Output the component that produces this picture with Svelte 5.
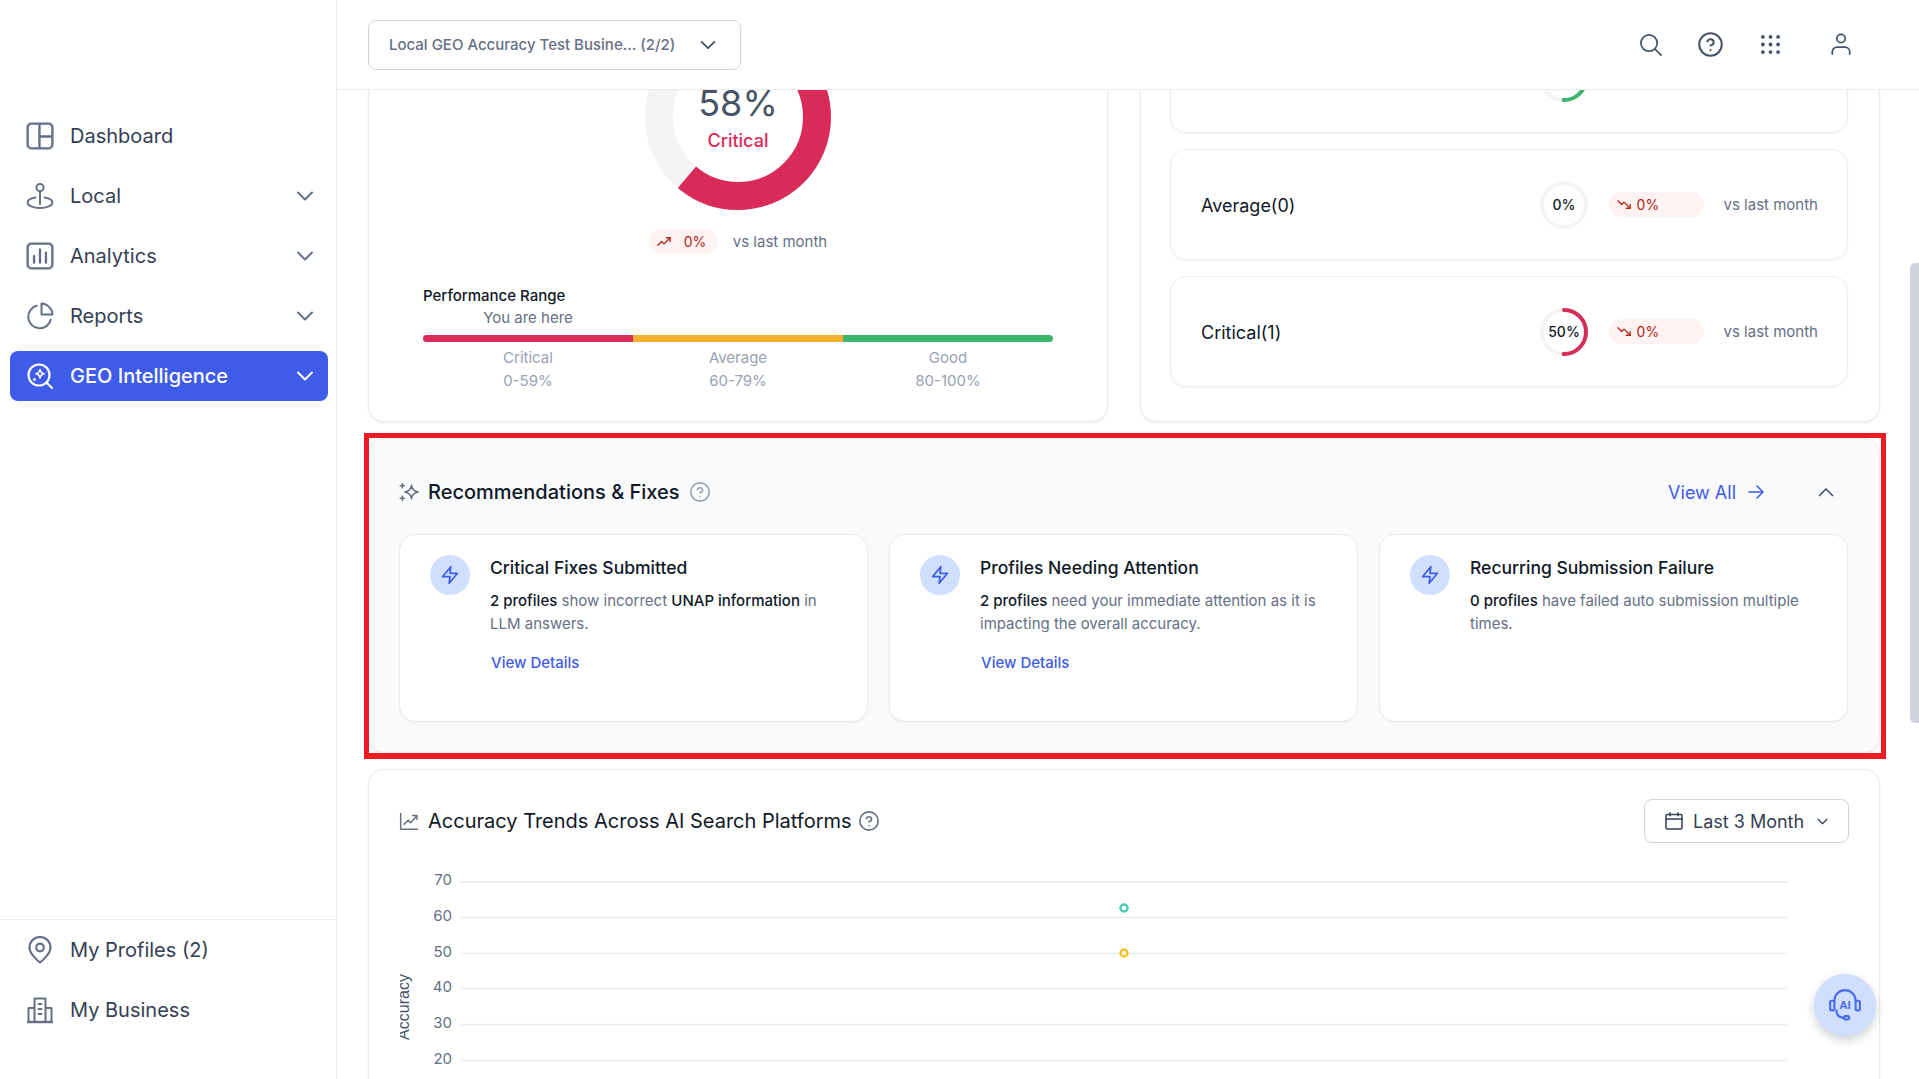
<script>
  const trends = [
    { label: 'Good(1)', pct: 50, color: '#3CB66E', dir: 'up' },
    { label: 'Average(0)', pct: 0, color: '#F3B12F', dir: 'down' },
    { label: 'Critical(1)', pct: 50, color: '#D92B5A', dir: 'down' }
  ];

  const fixes = [
    {
      title: 'Critical Fixes Submitted',
      parts: [['2 profiles', true], [' show incorrect ', false], ['UNAP information', true], [' in LLM answers.', false]],
      link: true
    },
    {
      title: 'Profiles Needing Attention',
      parts: [['2 profiles', true], [' need your immediate attention as it is impacting the overall accuracy.', false]],
      link: true
    },
    {
      title: 'Recurring Submission Failure',
      parts: [['0 profiles', true], [' have failed auto submission multiple times.', false]],
      link: false
    }
  ];

  const ranges = [
    { name: 'Critical', span: '0-59%' },
    { name: 'Average', span: '60-79%' },
    { name: 'Good', span: '80-100%' }
  ];

  const gridLines = [
    { v: 70, y: 22 },
    { v: 60, y: 57.5 },
    { v: 50, y: 93.5 },
    { v: 40, y: 128.5 },
    { v: 30, y: 164.5 },
    { v: 20, y: 200.5 },
    { v: 10, y: 236.5 }
  ];

  const ringLen = 2 * Math.PI * 22;
  const donutLen = 2 * Math.PI * 79;
</script>

{#snippet chevron(cls)}
  <svg class={cls} viewBox="0 0 24 24" fill="none" stroke="currentColor" stroke-width="2" stroke-linecap="round" stroke-linejoin="round"><path d="M5 8.5l7 7 7-7" /></svg>
{/snippet}

{#snippet help(cls)}
  <svg class={cls} viewBox="0 0 24 24" fill="none" stroke="currentColor" stroke-width="1.8" stroke-linecap="round" stroke-linejoin="round"><circle cx="12" cy="12" r="10" /><path d="M9.2 9.2a2.9 2.9 0 0 1 5.6 1c0 1.9-2.8 2.6-2.8 2.6" /><path d="M12 17h.01" /></svg>
{/snippet}

{#snippet trendIcon(dir)}
  <svg class="trend" viewBox="0 0 16 16" fill="none" stroke="currentColor" stroke-width="1.4" stroke-linecap="round" stroke-linejoin="round">
    {#if dir === 'up'}
      <path d="M1 12l4-4 2.5 2.5L14 4" /><path d="M10 4h4v4" />
    {:else}
      <path d="M1 4l4 4 2.5-2.5L14 12" /><path d="M10 12h4V8" />
    {/if}
  </svg>
{/snippet}

<div class="shell">
  <aside class="sidebar">
    <nav class="nav">
      <div class="nav-item">
        <svg class="nav-icon" viewBox="0 0 26 26" fill="none" stroke="currentColor" stroke-width="2.2" stroke-linejoin="round"><rect x="1.5" y="1.5" width="23" height="23" rx="3.5" /><path d="M12.5 1.5v23M12.5 13.5h12" /></svg>
        <span>Dashboard</span>
      </div>
      <div class="nav-item">
        <svg class="nav-icon" viewBox="0 0 28 28" fill="none" stroke="currentColor" stroke-width="2" stroke-linecap="round"><circle cx="14" cy="5.5" r="3.6" /><path d="M14 9v13" /><path d="M9.5 15.5C4.8 16.3 1.5 18 1.5 20.5c0 3 5.6 5.5 12.5 5.5s12.5-2.500 12.500-5.500c0-2.500-3.300-4.200-8-5" /></svg>
        <span>Local</span>
        {@render chevron('nav-chev')}
      </div>
      <div class="nav-item">
        <svg class="nav-icon" viewBox="0 0 26 26" fill="none" stroke="currentColor" stroke-width="2.2" stroke-linecap="round" stroke-linejoin="round"><rect x="1.5" y="1.500" width="23" height="23" rx="3.500" /><path d="M7.500 19v-6M13 19V7M18.500 19v-9" /></svg>
        <span>Analytics</span>
        {@render chevron('nav-chev')}
      </div>
      <div class="nav-item">
        <svg class="nav-icon" viewBox="0 0 28 28" fill="none" stroke="currentColor" stroke-width="2" stroke-linejoin="round"><path d="M11.500 3.500a11.500 11.500 0 1 0 13.500 13.500" /><path d="M15.500 1.500a11.500 11.500 0 0 1 11 11h-11z" /></svg>
        <span>Reports</span>
        {@render chevron('nav-chev')}
      </div>
      <div class="nav-item active">
        <svg class="nav-icon" viewBox="0 0 28 28" fill="none" stroke="currentColor" stroke-width="2.200" stroke-linecap="round" stroke-linejoin="round"><circle cx="13" cy="13" r="10.500" /><path d="M21 21l5 5" /><path d="M14 7.500c.4 2.800 1.400 3.800 4 4.300-2.600.5-3.600 1.500-4 4.300-.4-2.800-1.400-3.800-4-4.300 2.600-.5 3.600-1.500 4-4.300z" stroke-width="1.600" /><path d="M8.500 16.500v2M7.500 17.500h2" stroke-width="1.400" /></svg>
        <span>GEO Intelligence</span>
        {@render chevron('nav-chev')}
      </div>
    </nav>

    <div class="nav-bottom">
      <div class="nav-item">
        <svg class="nav-icon" viewBox="0 0 26 28" fill="none" stroke="currentColor" stroke-width="2.200" stroke-linejoin="round"><path d="M13 26.500s-10.500-8-10.500-15a10.500 10.500 0 0 1 21 0c0 7-10.500 15-10.500 15z" /><circle cx="13" cy="11.500" r="3.800" /></svg>
        <span>My Profiles (2)</span>
      </div>
      <div class="nav-item">
        <svg class="nav-icon" viewBox="0 0 28 28" fill="none" stroke="currentColor" stroke-width="2" stroke-linejoin="round"><path d="M1 26h26" stroke-width="2.400" /><path d="M2.500 26V12h6M25.500 26V12h-6" /><path d="M8.500 26V2.500h11V26" /><path d="M12.500 8h3M12.500 13h3M12.500 18h3" stroke-linecap="round" /></svg>
        <span>My Business</span>
      </div>
    </div>
  </aside>

  <div class="main">
    <header class="topbar">
      <div class="biz-select">
        <span>Local GEO Accuracy Test Busine... (2/2)</span>
        {@render chevron('biz-chev')}
      </div>
      <div class="top-icons">
        <svg class="top-icon" viewBox="0 0 24 24" fill="none" stroke="currentColor" stroke-width="1.800" stroke-linecap="round"><circle cx="10.500" cy="10.500" r="8.500" /><path d="M17 17l6 6" /></svg>
        {@render help('top-help')}
        <svg class="top-icon grid-icon" viewBox="0 0 20 20" fill="currentColor">
          {#each [2, 10, 18] as cy}
            {#each [2, 10, 18] as cx}
              <circle {cx} {cy} r="2" />
            {/each}
          {/each}
        </svg>
        <svg class="top-icon user-icon" viewBox="0 0 24 24" fill="none" stroke="currentColor" stroke-width="1.900" stroke-linecap="round"><circle cx="12" cy="6" r="4.500" /><path d="M2.500 23v-2.500a5 5 0 0 1 5-5h9a5 5 0 0 1 5 5V23" /></svg>
      </div>
    </header>

    <div class="scroll">
      <div class="scroll-inner">
        <div class="top-row">
          <section class="card score-card">
            <svg class="donut" viewBox="0 0 186 186">
              <circle cx="93" cy="93" r="79" fill="none" stroke="#F4F4F4" stroke-width="28" />
              <circle cx="93" cy="93" r="79" fill="none" stroke="#D92B5A" stroke-width="28" stroke-dasharray="{donutLen * 0.611} {donutLen}" transform="rotate(-90 93 93)" />
              <text x="93" y="92" text-anchor="middle" class="donut-num">58%</text>
              <text x="93" y="123" text-anchor="middle" class="donut-label">Critical</text>
            </svg>
            <div class="delta-row">
              <span class="pill pill-fit">{@render trendIcon('up')}<span>0%</span></span>
              <span class="vs">vs last month</span>
            </div>
            <div class="range">
              <div class="range-title">Performance Range</div>
              <div class="range-here">You are here</div>
              <div class="range-bar"><i class="seg-red"></i><i class="seg-amber"></i><i class="seg-green"></i></div>
              <div class="range-labels">
                {#each ranges as r}
                  <div>
                    <div>{r.name}</div>
                    <div>{r.span}</div>
                  </div>
                {/each}
              </div>
            </div>
          </section>

          <section class="card trend-card">
            {#each trends as t}
              <div class="trend-row">
                <div class="trend-label">{t.label}</div>
                <svg class="ring" viewBox="0 0 48 48">
                  <circle cx="24" cy="24" r="22" fill="none" stroke="#F4F4F4" stroke-width="4" />
                  {#if t.pct > 0}
                    <circle cx="24" cy="24" r="22" fill="none" stroke={t.color} stroke-width="4" stroke-linecap="round" stroke-dasharray="{ringLen * t.pct / 100} {ringLen}" transform="rotate(-90 24 24)" />
                  {/if}
                  <text x="24" y="29" text-anchor="middle" class="ring-text">{t.pct}%</text>
                </svg>
                <span class="pill pill-wide">{@render trendIcon(t.dir)}<span>0%</span></span>
                <span class="vs">vs last month</span>
              </div>
            {/each}
          </section>
        </div>

        <section class="recs">
          <div class="marker"></div>
          <div class="sec-head">
            <svg class="sec-icon" viewBox="0 0 24 24" fill="none" stroke="#667085" stroke-width="1.900" stroke-linecap="round" stroke-linejoin="round"><path d="M15 4c.5 4.500 2.800 7 8 8-5.200 1-7.500 3.500-8 8-.5-4.500-2.800-7-8-8 5.200-1 7.500-3.500 8-8z" /><path d="M4 2v5M1.500 4.500h5M4 17v5M1.500 19.500h5" /></svg>
            <h2 class="strong">Recommendations &amp; Fixes</h2>
            {@render help('sec-help')}
            <div class="head-right">
              <span class="view-all">View All</span>
              <svg class="arrow" viewBox="0 0 16 16" fill="none" stroke="currentColor" stroke-width="1.500" stroke-linecap="round" stroke-linejoin="round"><path d="M1 8h14M9 2l6 6-6 6" /></svg>
              <svg class="collapse" viewBox="0 0 16 16" fill="none" stroke="currentColor" stroke-width="1.700" stroke-linecap="round" stroke-linejoin="round"><path d="M1.500 11.500L8 5l6.500 6.500" /></svg>
            </div>
          </div>
          <div class="fix-grid">
            {#each fixes as f}
              <div class="fix-card">
                <div class="fix-badge">
                  <svg viewBox="0 0 24 24" fill="none" stroke="#3E5BE9" stroke-width="2" stroke-linejoin="round" stroke-linecap="round"><path d="M13 2L3 14h9l-1 8 10-12h-9l1-8z" /></svg>
                </div>
                <div class="fix-body">
                  <h3>{f.title}</h3>
                  <p>{#each f.parts as [text, strong]}{#if strong}<b>{text}</b>{:else}{text}{/if}{/each}</p>
                  {#if f.link}<span class="details">View Details</span>{/if}
                </div>
              </div>
            {/each}
          </div>
        </section>

        <section class="card chart-card">
          <div class="sec-head chart-head">
            <svg class="sec-icon" viewBox="0 0 24 24" fill="none" stroke="#667085" stroke-width="1.800" stroke-linecap="round" stroke-linejoin="round"><path d="M2 3v19h20" /><path d="M6 16l5-5 3 3 7-8" /><path d="M16.500 5.500H21.500V10" /></svg>
            <h2>Accuracy Trends Across AI Search Platforms</h2>
            {@render help('sec-help dark')}
            <div class="period">
              <svg class="cal" viewBox="0 0 18 18" fill="none" stroke="#344054" stroke-width="1.500" stroke-linecap="round"><rect x="1" y="2.500" width="16" height="14.500" rx="1" /><path d="M1 7h16M5 .8v3M13 .8v3" /></svg>
              <span>Last 3 Month</span>
              {@render chevron('period-chev')}
            </div>
          </div>
          <svg class="plot" width="1449" height="260" viewBox="0 0 1449 260">
            <text class="axis-title" transform="translate(9 147) rotate(-90)" text-anchor="middle">Accuracy</text>
            {#each gridLines as g}
              <line x1="61" x2="1387" y1={g.y} y2={g.y} stroke="#E9EAF3" stroke-width="1.500" />
              <text x="52" y={g.y + 3} text-anchor="end" class="tick">{g.v}</text>
            {/each}
            <circle cx="724" cy="48" r="3.500" fill="#fff" stroke="#4CCDB5" stroke-width="2.500" />
            <circle cx="724" cy="93" r="3.500" fill="#fff" stroke="#F5C326" stroke-width="2.500" />
          </svg>
        </section>
      </div>
    </div>

    <div class="scroll-thumb"></div>
    <button class="fab" aria-label="AI assistant">
      <svg viewBox="0 0 32 32" fill="none" stroke="#4A6CF0" stroke-width="2" stroke-linecap="round" stroke-linejoin="round">
        <path d="M6 13v-1a10 10 0 0 1 20 0v1" />
        <rect x="2" y="12" width="4" height="9" rx="1.500" />
        <rect x="26" y="12" width="4" height="9" rx="1.500" />
        <path d="M8 21c0 5 3 7 7 7" />
        <rect x="15" y="26.500" width="5" height="3" rx="1.500" />
        <text x="16" y="20" text-anchor="middle" class="fab-text">AI</text>
      </svg>
    </button>
  </div>
</div>

<style>
  :global(body) {
    margin: 0;
    font-family: Inter, "Liberation Sans", sans-serif;
    background: #fff;
    overflow: hidden;
  }

  .shell {
    display: flex;
    height: 100vh;
    overflow: hidden;
  }

  /* sidebar */
  .sidebar {
    width: 337px;
    flex: none;
    box-sizing: border-box;
    border-right: 1px solid #EAECF0;
    display: flex;
    flex-direction: column;
    justify-content: space-between;
  }
  .nav {
    padding: 111px 8px 0 10px;
    display: flex;
    flex-direction: column;
    gap: 10px;
  }
  .nav-bottom {
    border-top: 1px solid #EAECF0;
    padding: 5px 8px 44px 10px;
    display: flex;
    flex-direction: column;
    gap: 10px;
  }
  .nav-item {
    height: 50px;
    box-sizing: border-box;
    padding: 0 11px 0 16px;
    display: flex;
    align-items: center;
    border-radius: 8px;
    font-size: 20px;
    font-weight: 400;
    color: #344054;
  }
  .nav-item span {
    margin-left: 16px;
  }
  .nav-icon {
    width: 28px;
    height: 28px;
    flex: none;
    color: #667085;
  }
  :global(.nav-chev) {
    width: 24px;
    height: 24px;
    margin-left: auto;
    color: #667085;
  }
  .active {
    background: #3E5BE9;
    color: #fff;
    font-weight: 500;
  }
  .active .nav-icon,
  .active :global(.nav-chev) {
    color: #fff;
  }

  /* header */
  .main {
    flex: 1;
    min-width: 0;
    display: flex;
    flex-direction: column;
    position: relative;
  }
  .topbar {
    height: 90px;
    flex: none;
    box-sizing: border-box;
    border-bottom: 1px solid #EAECF0;
    padding: 20px 67px 0 31px;
    display: flex;
    justify-content: space-between;
  }
  .biz-select {
    width: 373px;
    height: 50px;
    box-sizing: border-box;
    border: 1px solid #D0D5DD;
    border-radius: 8px;
    padding: 0 17px 0 20px;
    display: flex;
    align-items: center;
    justify-content: space-between;
    font-size: 15px;
    font-weight: 500;
    color: #667085;
  }
  .biz-select span {
    padding-bottom: 2px;
  }
  :global(.biz-chev) {
    width: 22px;
    height: 22px;
    color: #475467;
    margin-right: 4px;
  }
  .top-icons {
    display: flex;
    align-items: flex-start;
    padding-top: 13px;
    gap: 38px;
    color: #475467;
  }
  .top-icon {
    width: 23px;
    height: 23px;
  }
  :global(.top-help) {
    width: 27px;
    height: 27px;
    margin: -2px -1px -2px -3px;
  }
  .grid-icon {
    width: 19px;
    height: 19px;
    margin-top: 2px;
  }
  .user-icon {
    width: 22px;
    height: 22px;
    margin-left: 12px;
  }

  /* scrolled content */
  .scroll {
    flex: 1;
    min-height: 0;
    overflow: hidden;
  }
  .scroll-inner {
    margin-top: -100px;
    padding: 0 39px 0 31px;
    display: flex;
    flex-direction: column;
    gap: 16px;
  }
  .card {
    background: #fff;
    border: 1px solid #EAECF0;
    border-radius: 16px;
    box-shadow: 0 1px 2px rgba(16, 24, 40, 0.08);
    box-sizing: border-box;
  }
  .top-row {
    display: grid;
    grid-template-columns: 740px 740px;
    gap: 32px;
  }

  .score-card {
    padding-top: 33px;
    height: 432px;
    display: flex;
    flex-direction: column;
    align-items: center;
  }
  .donut {
    width: 186px;
    height: 186px;
    flex: none;
  }
  .donut-num {
    font-size: 36px;
    fill: #475467;
  }
  .donut-label {
    font-size: 18px;
    font-weight: 500;
    fill: #D92B5A;
  }
  .delta-row {
    margin-top: 19px;
    display: flex;
    align-items: center;
    gap: 16px;
  }
  .pill {
    height: 25px;
    box-sizing: border-box;
    border-radius: 13px;
    background: #FEF3F2;
    color: #B42318;
    font-size: 14px;
    display: flex;
    align-items: center;
  }
  .pill-fit {
    width: 68px;
    padding-left: 8px;
    gap: 12px;
  }
  .pill-wide {
    width: 95px;
    padding-left: 8px;
    gap: 5px;
    flex: none;
  }
  .trend {
    width: 15px;
    height: 15px;
    flex: none;
  }
  .vs {
    font-size: 15px;
    color: #667085;
  }
  .range {
    align-self: stretch;
    margin: 31px 54px 0;
  }
  .range-title {
    font-size: 15px;
    line-height: 22px;
    font-weight: 500;
    color: #101828;
  }
  .range-here {
    width: 210px;
    text-align: center;
    font-size: 15px;
    line-height: 22px;
    color: #667085;
  }
  .range-bar {
    margin-top: 6px;
    height: 7px;
    display: flex;
    border-radius: 4px;
    overflow: hidden;
  }
  .range-bar i {
    flex: 1;
  }
  .seg-red { background: #D92B5A; }
  .seg-amber { background: #F3B12F; }
  .seg-green { background: #3CB66E; }
  .range-labels {
    margin-top: 4px;
    display: grid;
    grid-template-columns: repeat(3, 1fr);
    text-align: center;
    font-size: 15px;
    line-height: 23px;
    color: #98A2B3;
  }

  .trend-card {
    padding: 31px 31px 34px 29px;
    display: flex;
    flex-direction: column;
    gap: 16px;
  }
  .trend-row {
    height: 111px;
    box-sizing: border-box;
    border: 1px solid #EAECF0;
    border-radius: 16px;
    box-shadow: 0 1px 2px rgba(16, 24, 40, 0.05);
    padding: 0 29px 0 30px;
    display: flex;
    align-items: center;
  }
  .trend-label {
    flex: 1;
    padding-top: 2px;
    font-size: 18px;
    font-weight: 400;
    color: #101828;
  }
  .ring {
    width: 48px;
    height: 48px;
    flex: none;
    margin-right: 21px;
  }
  .ring-text {
    font-size: 14px;
    font-weight: 500;
    fill: #101828;
  }
  .trend-row .vs {
    margin-left: 20px;
  }

  /* recommendations */
  .recs {
    position: relative;
    height: 315px;
    box-sizing: border-box;
    background: #F9FAFB;
    border: 1px solid #EAECF0;
    border-radius: 16px;
    box-shadow: 0 1px 2px rgba(16, 24, 40, 0.08);
    padding: 31px 31px 0 30px;
  }
  .marker {
    position: absolute;
    top: -6px;
    left: -5px;
    right: -7px;
    bottom: -7px;
    border: 5px solid #ED1C24;
    border-bottom-width: 6px;
    pointer-events: none;
  }
  .sec-head {
    height: 44px;
    display: flex;
    align-items: center;
  }
  .sec-head h2 {
    margin: 0 0 0 9px;
    font-size: 20px;
    font-weight: 400;
    color: #101828;
  }
  .sec-head h2.strong {
    font-weight: 500;
  }
  .sec-icon {
    width: 20px;
    height: 20px;
    flex: none;
  }
  :global(.sec-help) {
    width: 22px;
    height: 22px;
    margin-left: 9px;
    color: #98A2B3;
    flex: none;
  }
  :global(.sec-help.dark) {
    color: #667085;
    margin-left: 6px;
  }
  .head-right {
    margin-left: auto;
    display: flex;
    align-items: center;
    color: #3E5BE9;
    padding-right: 14px;
  }
  .view-all {
    font-size: 18px;
    font-weight: 400;
  }
  .arrow {
    width: 16px;
    height: 16px;
    margin-left: 12px;
  }
  .collapse {
    width: 16px;
    height: 16px;
    margin-left: 54px;
    color: #475467;
  }
  .fix-grid {
    margin-top: 20px;
    display: grid;
    grid-template-columns: repeat(3, 469px);
    justify-content: space-between;
  }
  .fix-card {
    height: 188px;
    box-sizing: border-box;
    background: #fff;
    border: 1px solid #EAECF0;
    border-radius: 16px;
    box-shadow: 0 1px 2px rgba(16, 24, 40, 0.05);
    padding: 20px 30px 0 30px;
    display: flex;
    gap: 20px;
  }
  .fix-badge {
    width: 40px;
    height: 40px;
    flex: none;
    border-radius: 50%;
    background: #D1DFFF;
    display: flex;
    align-items: center;
    justify-content: center;
  }
  .fix-badge svg {
    width: 20px;
    height: 20px;
  }
  .fix-body h3 {
    margin: 0;
    font-size: 17.5px;
    line-height: 26px;
    font-weight: 500;
    color: #101828;
  }
  .fix-body p {
    margin: 8px 0 0;
    font-size: 15px;
    line-height: 23px;
    color: #667085;
  }
  .fix-body b {
    font-weight: 500;
    color: #101828;
  }
  .details {
    display: block;
    margin: 16px 0 0 1px;
    font-size: 15px;
    line-height: 23px;
    font-weight: 500;
    color: #3E5BE9;
  }

  /* chart */
  .chart-card {
    padding: 29px 30px 0;
    height: 420px;
  }
  .period {
    margin-left: auto;
    width: 205px;
    height: 44px;
    box-sizing: border-box;
    border: 1px solid #D0D5DD;
    border-radius: 8px;
    padding: 0 18px 0 20px;
    display: flex;
    align-items: center;
    font-size: 18px;
    color: #344054;
  }
  .cal {
    width: 18px;
    height: 18px;
    margin-right: 10px;
    flex: none;
  }
  :global(.period-chev) {
    width: 15px;
    height: 15px;
    margin-left: auto;
    color: #344054;
  }
  .plot {
    display: block;
    margin: 17px 0 0 1px;
  }
  .axis-title {
    font-family: "Liberation Sans", sans-serif;
    font-size: 16px;
    fill: #475467;
  }
  .tick {
    font-size: 15px;
    fill: #667085;
  }

  .scroll-thumb {
    position: absolute;
    top: 263px;
    right: 0;
    width: 9px;
    height: 460px;
    border-radius: 5px 0 0 5px;
    background: #D0D5DD;
  }
  .fab {
    position: absolute;
    left: 1477px;
    top: 974px;
    width: 62px;
    height: 62px;
    padding: 14px;
    border: 0;
    border-radius: 50%;
    background: #D1DFFF;
    box-shadow: 0 4px 10px rgba(16, 24, 40, 0.2);
  }
  .fab svg {
    display: block;
    width: 34px;
    height: 34px;
  }
  .fab-text {
    font-size: 11px;
    font-weight: 600;
    fill: #4A6CF0;
    stroke: none;
  }
</style>
